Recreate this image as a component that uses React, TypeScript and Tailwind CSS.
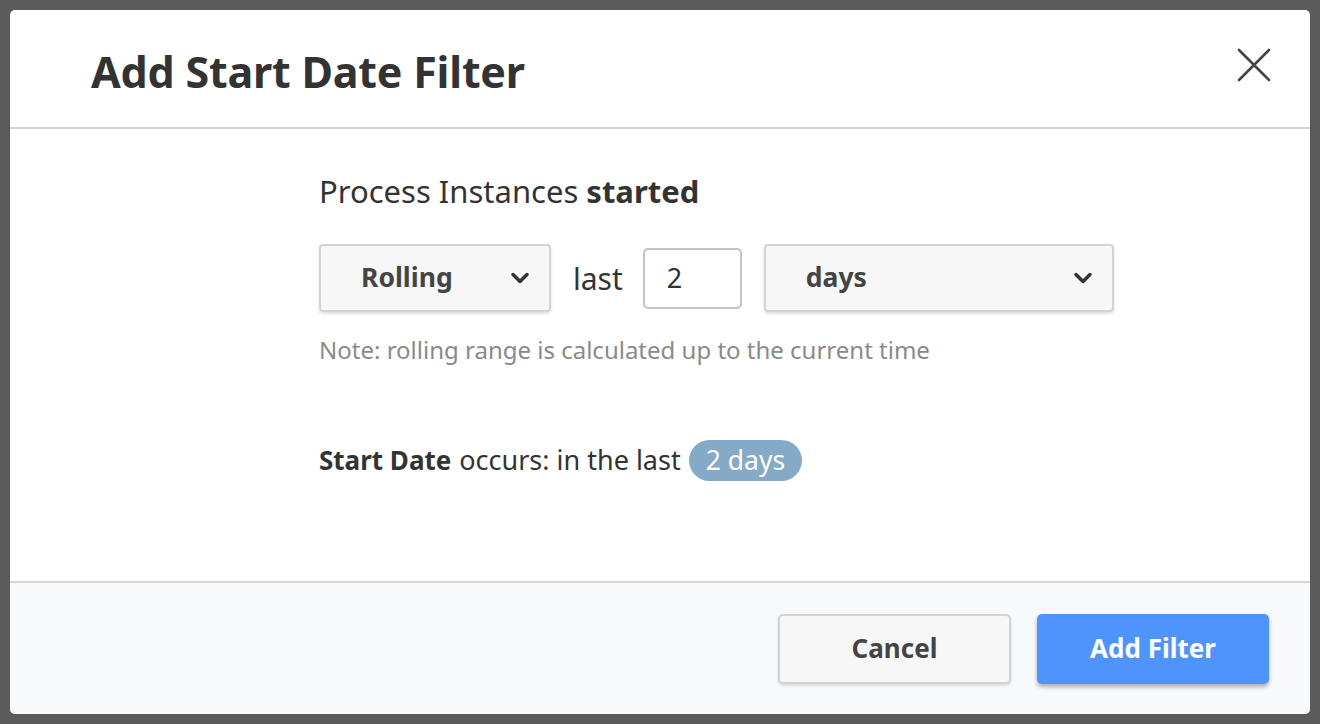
import { ChevronDown } from 'lucide-react'

const font = { fontFamily: '"Noto Sans", "Open Sans", sans-serif' }

function Select({ label, width }: { label: string; width: string }) {
  return (
    <div
      className={`${width} h-[68px] flex items-center justify-between pl-[40px] pr-[15px] rounded-[4px] border-2 border-[#d3d3d3] bg-[#f7f7f7] shadow-[0_2px_3px_rgba(0,0,0,0.12)]`}
    >
      <span className="text-[26.5px] font-bold text-[#444]">{label}</span>
      <ChevronDown size={28} strokeWidth={3} className="text-[#333]" />
    </div>
  )
}

function CloseIcon() {
  return (
    <svg width="34" height="34" viewBox="0 0 34 34" className="text-[#444] mb-[7px]">
      <path d="M2 2 L32 32 M32 2 L2 32" stroke="currentColor" strokeWidth="2.6" strokeLinecap="round" />
    </svg>
  )
}

export default function App() {
  return (
    <div className="w-full h-[724px] bg-[#5b5b5b] p-[10px]" style={font}>
      <div className="h-full flex flex-col bg-white rounded-[5px] overflow-hidden">
        <div className="h-[119px] shrink-0 flex items-center justify-between pl-[81px] pr-[39px] border-b-2 border-[#d6d6d6]">
          <h1 className="text-[43px] font-bold text-[#333] tracking-[-0.2px] pt-[8px]">Add Start Date Filter</h1>
          <CloseIcon />
        </div>

        <div className="flex-1 pl-[309px] pt-[42px]">
          <p className="text-[31px] text-[#333] leading-[40px]">
            Process Instances <span className="font-bold">started</span>
          </p>
          <div className="flex items-center mt-[33px]">
            <Select label="Rolling" width="w-[232px]" />
            <span className="text-[30px] text-[#333] ml-[22px] mr-[20px]">last</span>
            <div className="w-[99px] h-[61px] rounded-[5px] border-2 border-[#c4c4c4] flex items-center pl-[22px] text-[27px] text-[#333]">
              2
            </div>
            <div className="ml-[22px]">
              <Select label="days" width="w-[350px]" />
            </div>
          </div>
          <p className="text-[24px] text-[#8a8a8a] mt-[20px]">
            Note: rolling range is calculated up to the current time
          </p>
          <div className="flex items-center mt-[72px] text-[26px] text-[#333]">
            <span className="font-bold">Start Date</span>
            <span className="ml-[8px] text-[27px]">occurs: in the last</span>
            <span className="ml-[8px] h-[41px] px-[17px] rounded-full bg-[#85aac7] text-white text-[26.5px] flex items-center">
              2 days
            </span>
          </div>
        </div>

        <div className="h-[133px] shrink-0 bg-[#f8f9fa] border-t-2 border-[#d6d6d6] flex items-center justify-end gap-[26px] pr-[41px]">
          <button className="w-[233px] h-[70px] rounded-[5px] border-2 border-[#d3d3d3] bg-[#f7f7f7] shadow-[0_2px_3px_rgba(0,0,0,0.12)] text-[26px] font-bold text-[#444]">
            Cancel
          </button>
          <button className="w-[232px] h-[70px] rounded-[5px] bg-[#4f94fc] shadow-[0_3px_4px_rgba(0,0,0,0.3)] text-[26px] font-bold text-white">
            Add Filter
          </button>
        </div>
      </div>
    </div>
  )
}
